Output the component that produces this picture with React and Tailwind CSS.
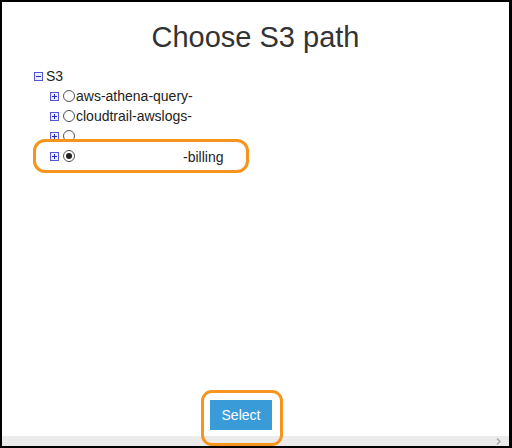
import React from "react";

const nodes = [
  { name: "aws-athena-query-", checked: false },
  { name: "cloudtrail-awslogs-", checked: false },
  { name: "", checked: false },
  { name: "-billing", checked: true, gap: true },
];

const TreeToggle = ({ open }) => (
  <span className="flex h-[9px] w-[9px] shrink-0 items-center justify-center border border-[#5555d8] bg-[#e9eeff]">
    <svg width="7" height="7" viewBox="0 0 7 7">
      <path d="M1 3.5h5" stroke="#2a2ab8" strokeWidth="1" />
      {!open && <path d="M3.5 1v5" stroke="#2a2ab8" strokeWidth="1" />}
    </svg>
  </span>
);

const Radio = ({ checked }) => (
  <span className="flex h-[12px] w-[12px] shrink-0 items-center justify-center rounded-full border border-[#555] bg-white">
    {checked && <span className="h-[6px] w-[6px] rounded-full bg-[#222]" />}
  </span>
);

export default function App() {
  return (
    <div
      className="relative flex h-[448px] w-[512px] flex-col border-t-2 border-b-2 border-l-2 border-r-[3px] border-black bg-white"
      style={{ fontFamily: '"Liberation Sans", Arial, sans-serif' }}
    >
      {/* Content */}
      <div className="flex flex-1 flex-col">
        <h1 className="pt-[19px] text-center text-[29px] leading-[32px] text-[#333]">
          Choose S3 path
        </h1>

        {/* Tree */}
        <div className="mt-[13px] pl-[32px] text-[14px] text-[#222]">
          <div className="flex h-[20px] items-center gap-[3px]">
            <TreeToggle open />
            <span>S3</span>
          </div>
          <div className="pl-[16px]">
            {nodes.map((n, i) => (
              <div key={i} className="flex h-[20px] items-center">
                <TreeToggle />
                <span className="ml-[4px]">
                  <Radio checked={n.checked} />
                </span>
                <span className={n.gap ? "ml-[108px] mt-[3px]" : "ml-px"}>
                  {n.name}
                </span>
              </div>
            ))}
          </div>
        </div>
      </div>

      {/* Button */}
      <div className="mb-[6px] pl-[208px]">
        <button className="h-[30px] w-[62px] bg-[#3a9bd9] text-[14px] text-white">
          Select
        </button>
      </div>

      {/* Scrollbar */}
      <div className="flex h-[10px] items-center justify-end bg-[#ebebeb] pr-[8px]">
        <svg width="5" height="7" viewBox="0 0 5 7">
          <path d="M1 0.5l3 3-3 3" stroke="#a8a8a8" strokeWidth="1.5" fill="none" />
        </svg>
      </div>

      {/* annotations */}
      <div className="pointer-events-none absolute left-[31px] top-[137px] h-[34px] w-[216px] rounded-[12px] border-[3px] border-[#f7941d]" />
      <div className="pointer-events-none absolute left-[199px] top-[388px] h-[56px] w-[82px] rounded-[11px] border-[3px] border-[#f7941d]" />
    </div>
  );
}
